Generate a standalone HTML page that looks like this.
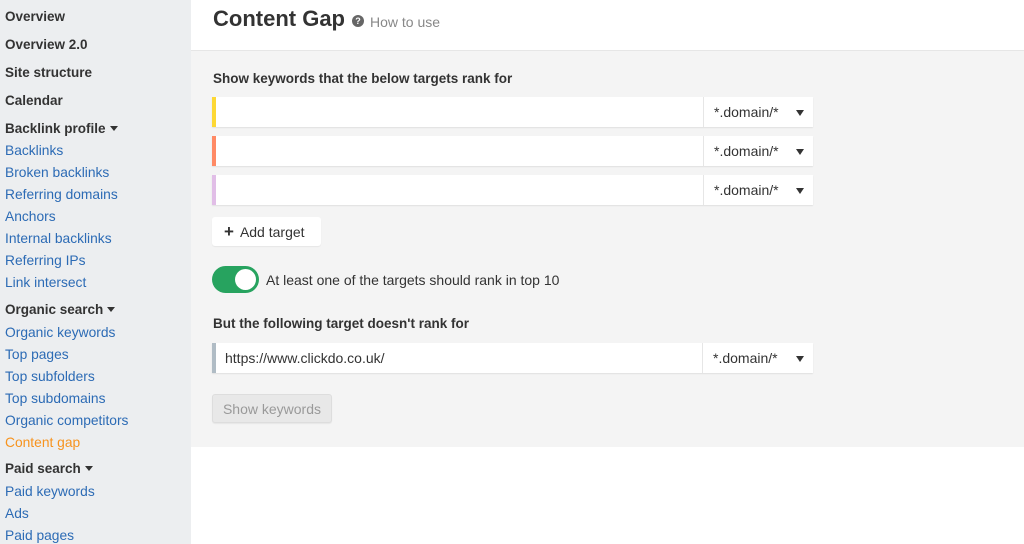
<!DOCTYPE html>
<html><head><style>
*{margin:0;padding:0;box-sizing:border-box}
body{width:1024px;height:544px;overflow:hidden;font-family:"Liberation Sans",Arial,sans-serif;background:#fff;position:relative}
#sb{position:absolute;left:0;top:0;width:191px;height:544px;background:#eceef0}
.it{position:absolute;left:5px;font-size:13.5px;white-space:nowrap;line-height:16px}
.b{font-weight:bold;color:#333}
.l{color:#2c6bb5;font-size:13.8px}
.tri{display:inline-block;width:0;height:0;border-left:4px solid transparent;border-right:4px solid transparent;border-top:5px solid #333;margin-left:4px;vertical-align:2px}
#panel{position:absolute;left:191px;top:50px;width:833px;height:397px;background:#f4f4f4;border-top:1px solid #e6e6e6}
h1{position:absolute;left:213px;top:6px;font-size:22px;font-weight:bold;color:#333}
.q{position:absolute;left:352px;top:15px;width:12px;height:12px;border-radius:50%;background:#666;color:#fff;font-size:9px;font-weight:bold;text-align:center;line-height:12px}
.how{position:absolute;left:370px;top:14px;font-size:14px;color:#888}
.lbl{position:absolute;left:213px;font-size:13.5px;font-weight:bold;color:#333}
.inp{position:absolute;left:212px;width:601px;height:30px;background:#fff;box-shadow:0 1px 1px rgba(0,0,0,.08)}
.inp .bar{position:absolute;left:0;top:0;width:4px;height:100%}
.inp .sel{position:absolute;left:491px;top:0;width:110px;height:100%;border-left:1px solid #e6e6e6;font-size:14px;color:#333;padding-left:10px;line-height:30px}
.inp .sel:after{content:"";position:absolute;right:9px;top:13px;border-left:4px solid transparent;border-right:4px solid transparent;border-top:6px solid #333}
.btn{position:absolute;left:212px;background:#fff;border-radius:3px;font-size:14px;color:#333;box-shadow:0 1px 1px rgba(0,0,0,.06)}
</style></head><body>
<div id="sb">
<div class="it b" style="top:9px">Overview</div>
<div class="it b" style="top:37px">Overview 2.0</div>
<div class="it b" style="top:65px">Site structure</div>
<div class="it b" style="top:93px">Calendar</div>
<div class="it b" style="top:121px">Backlink profile<span class="tri"></span></div>
<div class="it l" style="top:143px">Backlinks</div>
<div class="it l" style="top:165px">Broken backlinks</div>
<div class="it l" style="top:187px">Referring domains</div>
<div class="it l" style="top:209px">Anchors</div>
<div class="it l" style="top:231px">Internal backlinks</div>
<div class="it l" style="top:253px">Referring IPs</div>
<div class="it l" style="top:275px">Link intersect</div>
<div class="it b" style="top:302px">Organic search<span class="tri"></span></div>
<div class="it l" style="top:325px">Organic keywords</div>
<div class="it l" style="top:347px">Top pages</div>
<div class="it l" style="top:369px">Top subfolders</div>
<div class="it l" style="top:391px">Top subdomains</div>
<div class="it l" style="top:413px">Organic competitors</div>
<div class="it l" style="top:435px;color:#f7931e">Content gap</div>
<div class="it b" style="top:461px">Paid search<span class="tri"></span></div>
<div class="it l" style="top:484px">Paid keywords</div>
<div class="it l" style="top:506px">Ads</div>
<div class="it l" style="top:528px">Paid pages</div>
</div>
<h1>Content Gap</h1><div class="q">?</div><div class="how">How to use</div>
<div id="panel"></div>
<div class="lbl" style="top:71px">Show keywords that the below targets rank for</div>
<div class="inp" style="top:97px"><div class="bar" style="background:#fdd835"></div><div class="sel">*.domain/*</div></div>
<div class="inp" style="top:136px"><div class="bar" style="background:#ff8a65"></div><div class="sel">*.domain/*</div></div>
<div class="inp" style="top:175px"><div class="bar" style="background:#e1bee7"></div><div class="sel">*.domain/*</div></div>
<div class="btn" style="top:217px;width:109px;height:29px;line-height:29px;padding-left:12px"><b style="font-size:17px;margin-right:6px">+</b>Add target</div>
<div style="position:absolute;left:212px;top:266px;width:47px;height:27px;border-radius:14px;background:#27a35f"><div style="position:absolute;right:3px;top:3px;width:21px;height:21px;border-radius:50%;background:#fff"></div></div>
<div style="position:absolute;left:266px;top:272px;font-size:14px;color:#333">At least one of the targets should rank in top 10</div>
<div class="lbl" style="top:316px">But the following target doesn't rank for</div>
<div class="inp" style="top:343px"><div class="bar" style="background:#b0bcc5"></div><div style="position:absolute;left:13px;top:7px;font-size:14px;color:#333">https://www.clickdo.co.uk/</div><div class="sel" style="left:490px;width:111px">*.domain/*</div></div>
<div class="btn" style="top:394px;width:120px;height:29px;line-height:29px;text-align:center;background:#e8e8e8;color:#999;border:1px solid #ddd">Show keywords</div>
</body></html>
